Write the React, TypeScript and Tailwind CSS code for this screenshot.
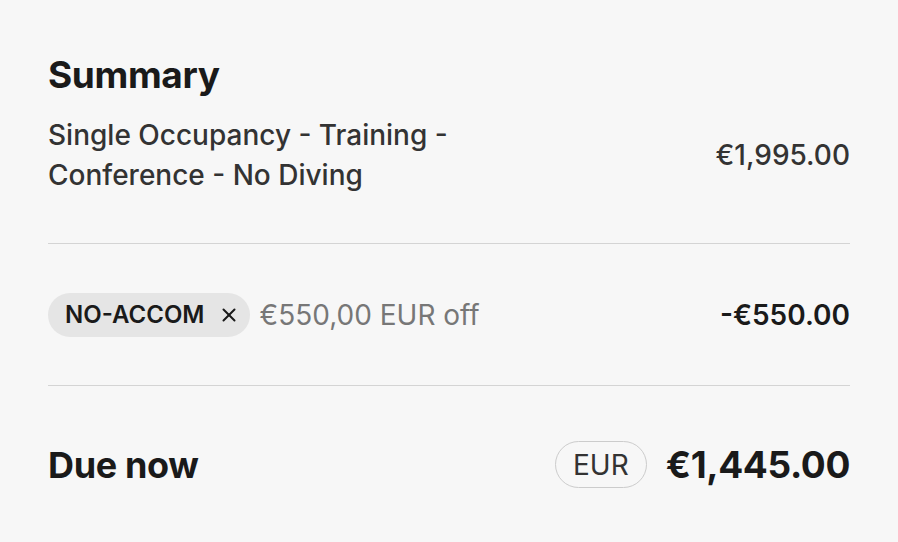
import { X } from 'lucide-react';

export default function App() {
  return (
    <div
      className="w-[898px] h-[542px] bg-[#f7f7f7] px-12 pt-[54px] text-[#1a1a1a]"
      style={{ fontFamily: 'Inter, "Noto Sans", sans-serif' }}
    >
      <h2 className="text-[37px] leading-[42px] font-bold tracking-[-0.01em]">Summary</h2>

      <div className="mt-[19px] flex items-center justify-between pb-[48px] border-b border-[#d4d4d4]">
        <div className="text-[28px] leading-[40px] font-medium text-[#333333] w-[440px]">
          Single Occupancy - Training - Conference - No Diving
        </div>
        <div className="text-[28px] leading-[40px] font-medium text-[#333333]">€1,995.00</div>
      </div>

      <div className="flex items-center justify-between pt-[49px] pb-[48px] border-b border-[#d4d4d4]">
        <div className="flex items-center gap-[10px]">
          <div className="flex items-center h-[44px] rounded-full bg-[#e5e5e5] pl-[17px] pr-[10px] gap-[13px]">
            <span className="text-[24px] leading-none font-semibold text-[#1a1a1a]">NO-ACCOM</span>
            <X size={22} strokeWidth={2.2} className="text-[#1a1a1a]" />
          </div>
          <span className="text-[28px] leading-none text-[#777777]">€550,00 EUR off</span>
        </div>
        <span className="text-[28px] leading-none font-semibold text-[#1a1a1a]">-€550.00</span>
      </div>

      <div className="flex items-center justify-between pt-[55px]">
        <span className="text-[36px] leading-none font-bold tracking-[-0.01em]">Due now</span>
        <div className="flex items-center gap-[19px]">
          <span className="h-[47px] px-[17px] flex items-center rounded-full border border-[#cccccc] text-[28px] leading-none text-[#333333]">
            EUR
          </span>
          <span className="text-[37px] leading-none font-bold tracking-[-0.01em]">€1,445.00</span>
        </div>
      </div>
    </div>
  );
}
